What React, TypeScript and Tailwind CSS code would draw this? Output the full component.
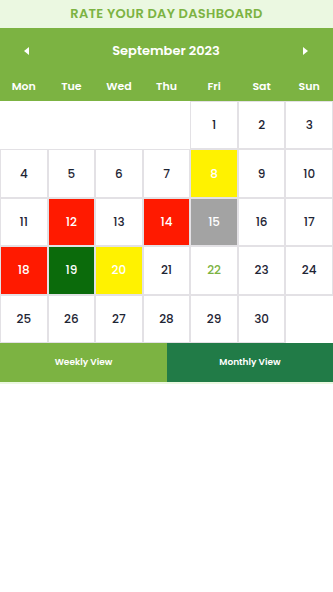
import React from "react";

const DAYS = ["Mon", "Tue", "Wed", "Thu", "Fri", "Sat", "Sun"];

const RATINGS: Record<number, string> = {
  8: "bg-[#fff200] text-white",
  12: "bg-[#ff1a00] text-white",
  14: "bg-[#ff1a00] text-white",
  15: "bg-[#a3a3a3] text-white",
  18: "bg-[#ff1a00] text-white",
  19: "bg-[#0b6b0b] text-white",
  20: "bg-[#fff200] text-white",
  22: "bg-white text-[#7cb342]",
};

function Arrow(props: { left?: boolean }) {
  return (
    <svg width="5" height="8" viewBox="0 0 5 8" fill="white">
      {props.left ? <path d="M5 0 L0 4 L5 8 Z" /> : <path d="M0 0 L5 4 L0 8 Z" />}
    </svg>
  );
}

export default function App() {
  // september 2023 starts on a friday
  const cells: (number | null)[] = [null, null, null, null];
  for (let d = 1; d <= 30; d++) cells.push(d);
  while (cells.length % 7) cells.push(null);

  return (
    <div className="w-[333px] h-[592px] bg-white font-['Poppins','Lato','Inter',sans-serif]">
      <div className="h-[28px] bg-[#ebf8e1] flex items-center justify-center">
        <h1 className="text-[13px] font-semibold text-[#7cb342] tracking-[0.3px]">RATE YOUR DAY DASHBOARD</h1>
      </div>
      <div className="bg-[#7cb342] h-[73px] flex flex-col">
        <div className="flex items-center justify-between pl-[24px] pr-[25px] h-[44px] pt-[1px]">
          <Arrow left />
          <span className="text-white font-semibold text-[13px]">September 2023</span>
          <Arrow />
        </div>
        <div className="grid grid-cols-7 h-[29px] items-center">
          {DAYS.map((d) => (
            <span key={d} className="text-center text-white font-semibold text-[11px]">
              {d}
            </span>
          ))}
        </div>
      </div>
      <div className="grid grid-cols-7">
        {cells.map((d, i) =>
          d === null ? (
            <div key={i} className={i < 7 ? "h-[48.4px]" : "h-[48.4px] border border-[#e3e1e5] border-r-0 border-b-0"} />
          ) : (
            <div
              key={i}
              className={
                "h-[48.4px] border border-[#e3e1e5] flex items-center justify-center text-[12px] font-medium " +
                (RATINGS[d] ?? "bg-white text-[#1e2535]")
              }
            >
              {d}
            </div>
          )
        )}
      </div>
      <div className="flex h-[39px]">
        <button className="w-[167px] bg-[#7cb342] text-white text-[9px] font-semibold">Weekly View</button>
        <button className="flex-1 bg-[#217b47] text-white text-[9px] font-semibold">Monthly View</button>
      </div>
      <div className="h-[2px] bg-[#ebf8e1]" />
    </div>
  );
}
